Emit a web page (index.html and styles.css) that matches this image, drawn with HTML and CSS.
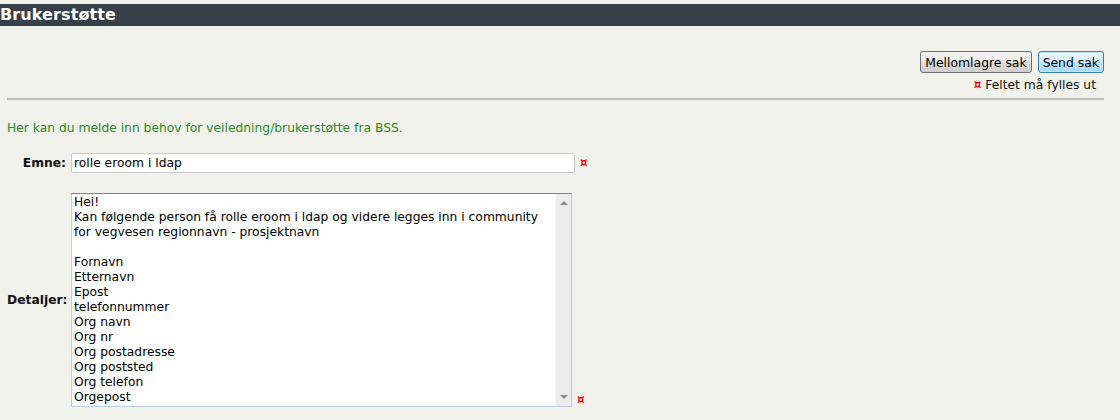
FILE: index.html
```html
<!DOCTYPE html>
<html lang="no">
<head>
    <meta charset="UTF-8">
    <title>Brukerstøtte</title>
    <link rel="stylesheet" href="styles.css">
</head>
<body>
    <div class="titlebar">
        <h1>Brukerstøtte</h1>
    </div>

    <div class="toolbar">
        <div class="buttons">
            <button type="button" class="btn">Mellomlagre sak</button>
            <button type="button" class="btn btn-focus">Send sak</button>
        </div>
        <p class="required-note"><span class="req">¤</span> Feltet må fylles ut</p>
    </div>

    <hr class="divider">

    <p class="intro">Her kan du melde inn behov for veiledning/brukerstøtte fra BSS.</p>

    <form class="case-form">
        <div class="form-row">
            <label for="emne">Emne:</label>
            <input type="text" id="emne" class="field-input" value="rolle eroom i ldap">
            <span class="req">¤</span>
        </div>

        <div class="form-row details-row">
            <label for="detaljer">Detaljer:</label>
            <div class="details-box">
                <textarea id="detaljer">Hei!
Kan følgende person få rolle eroom i ldap og videre legges inn i community for vegvesen regionnavn - prosjektnavn

Fornavn
Etternavn
Epost
telefonnummer
Org navn
Org nr
Org postadresse
Org poststed
Org telefon
Orgepost</textarea>
                <div class="scrollbar">
                    <span class="arrow arrow-up"></span>
                    <span class="arrow arrow-down"></span>
                </div>
            </div>
            <span class="req req-bottom">¤</span>
        </div>
    </form>
</body>
</html>
```

FILE: styles.css
```css
body {
    margin: 0;
    padding-top: 4px;
    background: #f2f2ec;
    font-family: "DejaVu Sans", Verdana, sans-serif;
    font-size: 12.3px;
    color: #111;
}
.titlebar {
    background: #373f48;
    height: 22px;
}
.titlebar h1 {
    margin: 0;
    color: #fff;
    font-size: 16px;
    line-height: 22px;
    letter-spacing: 0.1px;
}
.toolbar {
    padding: 25px 16px 0 0;
    display: flex;
    flex-direction: column;
    align-items: flex-end;
}
.buttons {
    display: flex;
    gap: 6px;
}
.btn {
    font-family: "DejaVu Sans", Verdana, sans-serif;
    font-size: 12.4px;
    height: 22px;
    padding: 0 4px;
    color: #000;
    border: 1px solid #707070;
    border-radius: 3px;
    background: linear-gradient(#f2f2f2 0%, #ebebeb 50%, #dddddd 51%, #cfcfcf 100%);
}
.btn-focus {
    border-color: #3c7fb1;
    background: linear-gradient(#eaf6fd 0%, #d9f0fc 50%, #bee6fd 51%, #a7d9f5 100%);
    box-shadow: inset 0 0 0 1px #c4e5f6;
}
.required-note {
    margin: 4px 8px 0 0;
    line-height: 16px;
}
.req {
    color: #f00;
    font-size: 12px;
    font-weight: bold;
}
.divider {
    margin: 5px 16px 0 7px;
    border: none;
    height: 2px;
    background: #bdbdbb;
}
.intro {
    margin: 20px 0 0 7px;
    color: #2a8a2a;
    line-height: 16px;
}
.case-form {
    margin: 17px 0 0 7px;
}
.form-row {
    display: grid;
    grid-template-columns: 59px auto auto;
    column-gap: 5px;
    align-items: center;
    justify-content: start;
}
.form-row label {
    font-weight: bold;
    text-align: right;
}
.field-input {
    width: 504px;
    height: 20px;
    box-sizing: border-box;
    margin: 0;
    padding: 0 2px;
    border: 1px solid #c9c9c9;
    border-radius: 2px;
    background: #fff;
    font-family: "DejaVu Sans", Tahoma, sans-serif;
    font-size: 12.3px;
}
.details-row {
    margin-top: 20px;
}
.details-box {
    display: flex;
    width: 501px;
    height: 214px;
    box-sizing: border-box;
    border: 1px solid #b5cfe5;
    border-top-color: #5d8cb6;
    background: #fff;
}
.details-box textarea {
    flex: 1;
    border: none;
    outline: none;
    resize: none;
    overflow: hidden;
    margin: 0;
    padding: 1px 2px;
    font-family: "DejaVu Sans", Tahoma, sans-serif;
    font-size: 12.3px;
    line-height: 15px;
    color: #000;
}
.scrollbar {
    width: 15px;
    background: #ececec;
    border-left: 1px solid #f8f8f8;
    display: flex;
    flex-direction: column;
    justify-content: space-between;
    align-items: center;
    padding: 7px 0;
}
.arrow {
    width: 0;
    height: 0;
    border-left: 4px solid transparent;
    border-right: 4px solid transparent;
}
.arrow-up {
    border-bottom: 4px solid #8a8a8a;
}
.arrow-down {
    border-top: 4px solid #8a8a8a;
}
.req-bottom {
    align-self: end;
    line-height: 14px;
}
```
